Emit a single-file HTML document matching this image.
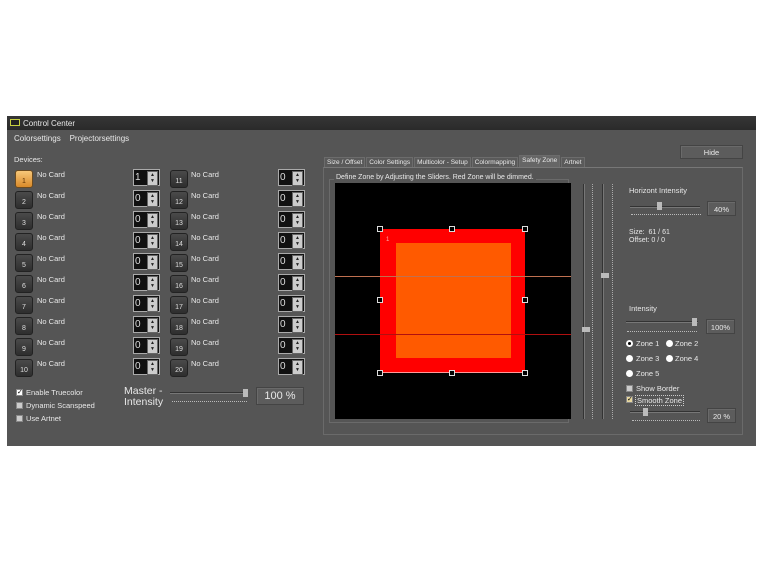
<!DOCTYPE html>
<html><head><style>
*{margin:0;padding:0;box-sizing:border-box}
body{width:762px;height:562px;background:#fff;position:relative;font-family:"Liberation Sans",sans-serif;font-size:8px;color:#e8e8e8;overflow:hidden}
.a{position:absolute}
.win{left:7px;top:116px;width:749px;height:330px;background:#555555}
.title{left:7px;top:116px;width:749px;height:14px;background:linear-gradient(#363636,#2a2a2a);font-size:8px;padding:3px 0 0 16px}
.btn{width:18px;height:18px;border-radius:3px;background:linear-gradient(#4a4a4a,#2e2e2e);border:1px solid #222;color:#ddd;font-size:7px;text-align:center;padding-top:7px}
.btn.on{background:linear-gradient(#f7c77a,#d98a2a);color:#5a3000;border-color:#6a4a20}
.spin{width:27px;height:17px;background:#111;border:1px solid #aaa;font-size:10px;color:#ddd;padding-left:1px;line-height:15px}
.spin:after{content:"▲\A▼";white-space:pre;font-size:5px;line-height:6px;color:#222;text-align:center;position:absolute;right:1px;top:1px;width:9px;height:13px;background:#ccc;border:1px solid #666}
.nc{font-size:7.5px}
.tabs{left:324px;top:155px;display:flex;align-items:flex-end;height:13px}
.tab{height:11px;font-size:6.5px;padding:1px 2px 0;background:#5a5a5a;border:1px solid #6c6c6c;border-bottom:none;white-space:nowrap;margin-right:1px}
.hbox{background:#5c5c5c;border:1px solid #444;box-shadow:inset 1px 1px 0 #6a6a6a;text-align:center}
.dots{border-top:1px dotted #bbb;height:1px}
.track{height:2px;background:#333;border-bottom:1px solid #777}
.h{width:6px;height:6px;border:1px solid #ddd;background:#000}
.rad{width:7px;height:7px;border-radius:50%;background:#fff}
.chk{width:7px;height:7px;background:#ccc;border:1px solid #888;font-size:7px;line-height:5px;color:#000;text-align:center}
</style></head><body>
<div class="a win"></div>
<div class="a title"><span class="a" style="left:3px;top:3px;width:10px;height:7px;border:1px solid #c8d040;background:#222"></span>Control Center</div>
<div class="a" style="left:14px;top:134px">Colorsettings &nbsp;&nbsp; Projectorsettings</div>
<div class="a" style="left:14px;top:155px;font-size:7.5px">Devices:</div>

<div class="a btn on" style="left:15px;top:170px">1</div><div class="a nc" style="left:37px;top:170px">No Card</div><div class="a spin" style="left:133px;top:169px">1</div>
<div class="a btn" style="left:15px;top:191px">2</div><div class="a nc" style="left:37px;top:191px">No Card</div><div class="a spin" style="left:133px;top:190px">0</div>
<div class="a btn" style="left:15px;top:212px">3</div><div class="a nc" style="left:37px;top:212px">No Card</div><div class="a spin" style="left:133px;top:211px">0</div>
<div class="a btn" style="left:15px;top:233px">4</div><div class="a nc" style="left:37px;top:233px">No Card</div><div class="a spin" style="left:133px;top:232px">0</div>
<div class="a btn" style="left:15px;top:254px">5</div><div class="a nc" style="left:37px;top:254px">No Card</div><div class="a spin" style="left:133px;top:253px">0</div>
<div class="a btn" style="left:15px;top:275px">6</div><div class="a nc" style="left:37px;top:275px">No Card</div><div class="a spin" style="left:133px;top:274px">0</div>
<div class="a btn" style="left:15px;top:296px">7</div><div class="a nc" style="left:37px;top:296px">No Card</div><div class="a spin" style="left:133px;top:295px">0</div>
<div class="a btn" style="left:15px;top:317px">8</div><div class="a nc" style="left:37px;top:317px">No Card</div><div class="a spin" style="left:133px;top:316px">0</div>
<div class="a btn" style="left:15px;top:338px">9</div><div class="a nc" style="left:37px;top:338px">No Card</div><div class="a spin" style="left:133px;top:337px">0</div>
<div class="a btn" style="left:15px;top:359px">10</div><div class="a nc" style="left:37px;top:359px">No Card</div><div class="a spin" style="left:133px;top:358px">0</div>
<div class="a btn" style="left:170px;top:170px">11</div><div class="a nc" style="left:191px;top:170px">No Card</div><div class="a spin" style="left:278px;top:169px">0</div>
<div class="a btn" style="left:170px;top:191px">12</div><div class="a nc" style="left:191px;top:191px">No Card</div><div class="a spin" style="left:278px;top:190px">0</div>
<div class="a btn" style="left:170px;top:212px">13</div><div class="a nc" style="left:191px;top:212px">No Card</div><div class="a spin" style="left:278px;top:211px">0</div>
<div class="a btn" style="left:170px;top:233px">14</div><div class="a nc" style="left:191px;top:233px">No Card</div><div class="a spin" style="left:278px;top:232px">0</div>
<div class="a btn" style="left:170px;top:254px">15</div><div class="a nc" style="left:191px;top:254px">No Card</div><div class="a spin" style="left:278px;top:253px">0</div>
<div class="a btn" style="left:170px;top:275px">16</div><div class="a nc" style="left:191px;top:275px">No Card</div><div class="a spin" style="left:278px;top:274px">0</div>
<div class="a btn" style="left:170px;top:296px">17</div><div class="a nc" style="left:191px;top:296px">No Card</div><div class="a spin" style="left:278px;top:295px">0</div>
<div class="a btn" style="left:170px;top:317px">18</div><div class="a nc" style="left:191px;top:317px">No Card</div><div class="a spin" style="left:278px;top:316px">0</div>
<div class="a btn" style="left:170px;top:338px">19</div><div class="a nc" style="left:191px;top:338px">No Card</div><div class="a spin" style="left:278px;top:337px">0</div>
<div class="a btn" style="left:170px;top:359px">20</div><div class="a nc" style="left:191px;top:359px">No Card</div><div class="a spin" style="left:278px;top:358px">0</div>

<div class="a chk" style="left:16px;top:389px;background:#fff">✓</div><div class="a" style="left:26px;top:388px;font-size:7.5px">Enable Truecolor</div>
<div class="a chk" style="left:16px;top:402px"></div><div class="a" style="left:26px;top:401px;font-size:7.5px">Dynamic Scanspeed</div>
<div class="a chk" style="left:16px;top:415px"></div><div class="a" style="left:26px;top:414px;font-size:7.5px">Use Artnet</div>
<div class="a" style="left:124px;top:386px;font-size:10.5px;line-height:11px">Master -<br>Intensity</div>
<div class="a track" style="left:170px;top:392px;width:76px"></div>
<div class="a" style="left:243px;top:389px;width:5px;height:8px;background:#bbb"></div>
<div class="a dots" style="left:172px;top:401px;width:75px"></div>
<div class="a hbox" style="left:256px;top:387px;width:48px;height:18px;font-size:11px;padding-top:2px">100 %</div>

<div class="a hbox" style="left:680px;top:145px;width:63px;height:14px;font-size:7.5px;padding-top:2px">Hide</div>
<div class="a tabs">
<div class="tab">Size / Offset</div>
<div class="tab">Color Settings</div>
<div class="tab">Multicolor - Setup</div>
<div class="tab">Colormapping</div>
<div class="tab" style="height:13px;background:#666">Safety Zone</div>
<div class="tab">Artnet</div>
</div>
<div class="a" style="left:323px;top:167px;width:420px;height:268px;border:1px solid #6a6a6a;border-top-color:#777"></div>
<div class="a" style="left:329px;top:179px;width:240px;height:244px;border:1px solid #6a6a6a"></div>
<div class="a" style="left:334px;top:174px;font-size:7px;background:#555;padding:0 2px">Define Zone by Adjusting the Sliders. Red Zone will be dimmed.</div>
<div class="a" style="left:335px;top:183px;width:236px;height:236px;background:#000"></div>
<div class="a" style="left:380px;top:229px;width:145px;height:144px;background:#ff0000;border-bottom:1px solid #f99"></div>
<div class="a" style="left:396px;top:243px;width:115px;height:115px;background:#ff5a00"></div>
<div class="a" style="left:335px;top:276px;width:236px;height:1px;background:#c07050"></div>
<div class="a" style="left:335px;top:334px;width:236px;height:1px;background:#b01010"></div>
<div class="a" style="left:386px;top:237px;font-size:6px;color:#faa">1</div>
<div class="a h" style="left:377px;top:226px"></div><div class="a h" style="left:449px;top:226px"></div><div class="a h" style="left:522px;top:226px"></div>
<div class="a h" style="left:377px;top:297px"></div><div class="a h" style="left:522px;top:297px"></div>
<div class="a h" style="left:377px;top:370px"></div><div class="a h" style="left:449px;top:370px"></div><div class="a h" style="left:522px;top:370px"></div>

<div class="a" style="left:583px;top:184px;width:2px;height:235px;background:#333;border-right:1px solid #777"></div>
<div class="a" style="left:592px;top:184px;width:1px;height:235px;border-left:1px dotted #aaa"></div>
<div class="a" style="left:602px;top:184px;width:2px;height:235px;background:#333;border-right:1px solid #777"></div>
<div class="a" style="left:612px;top:184px;width:1px;height:235px;border-left:1px dotted #aaa"></div>
<div class="a" style="left:582px;top:327px;width:8px;height:5px;background:#bbb"></div>
<div class="a" style="left:601px;top:273px;width:8px;height:5px;background:#bbb"></div>

<div class="a" style="left:629px;top:186px;font-size:7.5px">Horizont Intensity</div>
<div class="a track" style="left:630px;top:206px;width:70px"></div>
<div class="a" style="left:657px;top:202px;width:5px;height:8px;background:#bbb"></div>
<div class="a dots" style="left:631px;top:214px;width:70px"></div>
<div class="a hbox" style="left:707px;top:201px;width:29px;height:15px;font-size:7.5px;padding-top:3px">40%</div>
<div class="a" style="left:629px;top:229px;font-size:7px;line-height:8px">Size:&nbsp; 61 / 61<br>Offset: 0 / 0</div>
<div class="a" style="left:629px;top:304px;font-size:7.5px">Intensity</div>
<div class="a track" style="left:626px;top:321px;width:72px"></div>
<div class="a" style="left:692px;top:318px;width:5px;height:8px;background:#bbb"></div>
<div class="a dots" style="left:627px;top:331px;width:70px"></div>
<div class="a hbox" style="left:706px;top:319px;width:29px;height:15px;font-size:7.5px;padding-top:3px">100%</div>
<div class="a rad" style="left:626px;top:340px;border:2px solid #fff;background:#000"></div><div class="a" style="left:636px;top:339px;font-size:7.5px">Zone 1</div>
<div class="a rad" style="left:666px;top:340px"></div><div class="a" style="left:675px;top:339px;font-size:7.5px">Zone 2</div>
<div class="a rad" style="left:626px;top:355px"></div><div class="a" style="left:636px;top:354px;font-size:7.5px">Zone 3</div>
<div class="a rad" style="left:666px;top:355px"></div><div class="a" style="left:675px;top:354px;font-size:7.5px">Zone 4</div>
<div class="a rad" style="left:626px;top:370px"></div><div class="a" style="left:636px;top:369px;font-size:7.5px">Zone 5</div>
<div class="a chk" style="left:626px;top:385px"></div><div class="a" style="left:636px;top:384px;font-size:7.5px">Show Border</div>
<div class="a chk" style="left:626px;top:396px;background:#e8d8a0">✓</div><div class="a" style="left:635px;top:395px;font-size:7.5px;border:1px dotted #ccc;padding:0 1px">Smooth Zone</div>
<div class="a track" style="left:630px;top:411px;width:70px"></div>
<div class="a" style="left:643px;top:408px;width:5px;height:8px;background:#bbb"></div>
<div class="a dots" style="left:632px;top:420px;width:68px"></div>
<div class="a hbox" style="left:707px;top:408px;width:29px;height:15px;font-size:7.5px;padding-top:3px">20 %</div>
</body></html>
